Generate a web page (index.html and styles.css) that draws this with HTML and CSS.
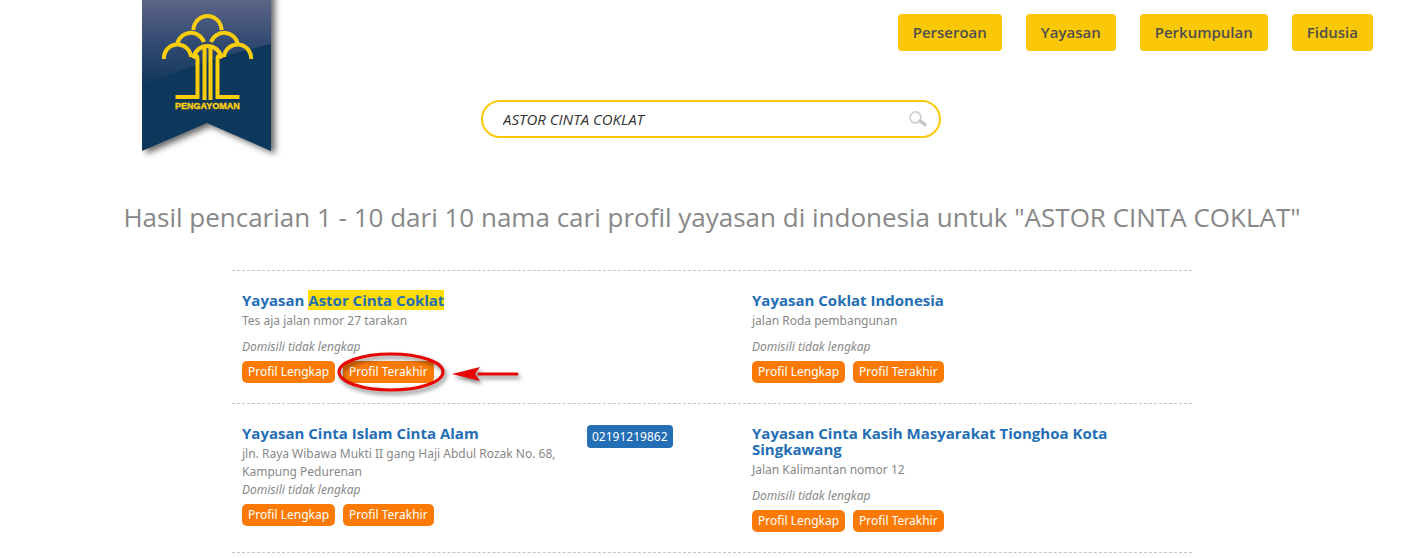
FILE: index.html
```html
<!DOCTYPE html>
<html lang="id">
<head>
  <meta charset="UTF-8" />
  <meta name="viewport" content="width=device-width, initial-scale=1" />
  <title>Cari Profil Yayasan</title>
  <link rel="stylesheet" href="styles.css">
</head>
<body>

<header class="header">
  <a href="#" class="logo" aria-label="Pengayoman">
    <svg width="148" height="165" viewBox="0 0 148 165">
      <defs>
        <linearGradient id="gloss" x1="0" y1="0" x2="0" y2="1">
          <stop offset="0" stop-color="#5c6486" />
          <stop offset="0.5" stop-color="#324a72" />
          <stop offset="1" stop-color="#10375c" />
        </linearGradient>
        <filter id="ribbonShadow" x="-10%" y="-10%" width="130%" height="130%">
          <feDropShadow dx="4" dy="3" stdDeviation="3" flood-color="#000" flood-opacity="0.6" />
        </filter>
      </defs>
      <path d="M0 -10H129V151L65 123L0 151Z" fill="#10375c" filter="url(#ribbonShadow)" />
      <path d="M0 0H129V44Q60 60 0 86Z" fill="url(#gloss)" />
      <!-- banyan tree -->
      <g fill="none" stroke="#fbce0c" stroke-width="4">
        <path d="M51.500 30A14 14 0 0 1 79.500 30" />
        <path d="M35 45A14 14 0 0 1 62 42" />
        <path d="M96 45A14 14 0 0 0 69 42" />
        <path d="M22 59A13.500 13.500 0 0 1 49 57" />
        <path d="M109 59A13.500 13.500 0 0 0 82 57" />
        <path d="M51 58Q55 46 65.500 46Q76 46 80 58" />
        <path d="M51 58Q55 53 55.500 59V97H33.500M80 58Q76 53 75.500 59V97H97.500" />
        <path d="M62.500 46V100M68.500 46V100" />
      </g>
      <text x="33" y="109" class="logo-text">PENGAYOMAN</text>
    </svg>
  </a>

  <nav class="menu">
    <a href="#">Perseroan</a>
    <a href="#">Yayasan</a>
    <a href="#">Perkumpulan</a>
    <a href="#">Fidusia</a>
  </nav>

  <form class="search">
    <input type="text" name="q" value="ASTOR CINTA COKLAT" aria-label="Nama yayasan">
    <button type="submit" aria-label="Cari">
      <svg width="18" height="16" viewBox="0 0 18 16">
        <circle cx="6.500" cy="6.500" r="5.500" fill="none" stroke="#d2d2d2" stroke-width="1.800" />
        <path d="M11 10L16 13.500" stroke="#c8c8c8" stroke-width="3.500" stroke-linecap="round" />
      </svg>
    </button>
  </form>
</header>

<main>
  <h1>Hasil pencarian 1 - 10 dari 10 nama cari profil yayasan di indonesia untuk "ASTOR CINTA COKLAT"</h1>

  <div class="results">
    <div class="row">
      <div class="item">
        <div class="info">
          <h2><a href="#">Yayasan <mark>Astor Cinta Coklat</mark></a></h2>
          <p class="address">Tes aja jalan nmor 27 tarakan</p>
          <p class="domicile">Domisili tidak lengkap</p>
          <div class="actions">
            <a href="#">Profil Lengkap</a>
            <span class="marked">
              <a href="#">Profil Terakhir</a>
              <svg class="pointer" width="192" height="50" viewBox="0 0 192 50">
                <ellipse cx="58" cy="24" rx="52" ry="18" fill="none" stroke="#e80404" stroke-width="3" />
                <path d="M146 26H184" stroke="#e80404" stroke-width="3" stroke-linecap="round" />
                <path d="M119 26L147 19L142 26L147 33Z" fill="#e80404" />
              </svg>
            </span>
          </div>
        </div>
      </div>
      <div class="item">
        <div class="info">
          <h2><a href="#">Yayasan Coklat Indonesia</a></h2>
          <p class="address">jalan Roda pembangunan</p>
          <p class="domicile">Domisili tidak lengkap</p>
          <div class="actions">
            <a href="#">Profil Lengkap</a>
            <a href="#">Profil Terakhir</a>
          </div>
        </div>
      </div>
    </div>

    <div class="row">
      <div class="item">
        <div class="info narrow">
          <h2><a href="#">Yayasan Cinta Islam Cinta Alam</a></h2>
          <p class="address">jln. Raya Wibawa Mukti II gang Haji Abdul Rozak No. 68, Kampung Pedurenan</p>
          <p class="domicile">Domisili tidak lengkap</p>
          <div class="actions">
            <a href="#">Profil Lengkap</a>
            <a href="#">Profil Terakhir</a>
          </div>
        </div>
        <a href="tel:02191219862" class="phone">02191219862</a>
      </div>
      <div class="item">
        <div class="info">
          <h2><a href="#">Yayasan Cinta Kasih Masyarakat Tionghoa Kota Singkawang</a></h2>
          <p class="address">Jalan Kalimantan nomor 12</p>
          <p class="domicile">Domisili tidak lengkap</p>
          <div class="actions">
            <a href="#">Profil Lengkap</a>
            <a href="#">Profil Terakhir</a>
          </div>
        </div>
      </div>
    </div>
  </div>
</main>

</body>
</html>
```
FILE: styles.css
```css
* {
  box-sizing: border-box;
}

body {
  margin: 0;
  background: #fff;
  color: #888;
  font-family: "Noto Sans", "Segoe UI", sans-serif;
  font-size: 12px;
  line-height: 18px;
}

a {
  text-decoration: none;
}

h1, h2, p {
  margin: 0;
}

.header {
  display: grid;
  grid-template-columns: 1fr 460px 1fr;
  grid-template-rows: 100px auto;
}

.logo {
  grid-column: 1;
  grid-row: 1 / 3;
  margin-left: 142px;
  height: 165px;
}

.logo svg {
  display: block;
}

.logo-text {
  fill: #fbce0c;
  stroke: #fbce0c;
  stroke-width: 0.4px;
  font-family: Arial, "Liberation Sans", sans-serif;
  font-size: 9px;
  font-weight: bold;
}

.menu {
  grid-column: 2 / 4;
  grid-row: 1;
  display: flex;
  justify-content: flex-end;
  align-items: flex-start;
  gap: 24px;
  padding: 14px 49px 0 0;
}

.menu a {
  padding: 0 15px;
  border-radius: 4px;
  background: #fac805;
  color: #4f4f4f;
  font-family: "Open Sans", "Segoe UI", sans-serif;
  font-size: 15px;
  font-weight: 600;
  line-height: 37px;
}

.search {
  grid-column: 2;
  grid-row: 2;
  display: flex;
  align-items: center;
  height: 38px;
  padding: 0 12px 0 20px;
  border: 2px solid #fac805;
  border-radius: 19px;
}

.search input {
  flex: 1;
  min-width: 0;
  padding: 0;
  border: 0;
  outline: 0;
  background: none;
  color: #333;
  font-family: "Open Sans", "Segoe UI", sans-serif;
  font-size: 15px;
  font-style: italic;
}

.search button {
  display: flex;
  padding: 0;
  border: 0;
  background: none;
  cursor: pointer;
}

main {
  padding-left: 2px;
}

h1 {
  margin: 32px 20px 0;
  font-family: "Open Sans", "Segoe UI", sans-serif;
  font-size: 26px;
  font-weight: 400;
  line-height: 40px;
  text-align: center;
}

.results {
  max-width: 960px;
  margin: 33px auto 0;
  border-top: 1px dashed #c4c4c4;
}

.row {
  display: grid;
  grid-template-columns: 500px 1fr;
  column-gap: 10px;
  padding: 21px 0 20px;
  border-bottom: 1px dashed #c4c4c4;
}

.item {
  display: flex;
  align-items: flex-start;
  padding: 0 10px;
}

.info {
  width: 370px;
}

.info.narrow {
  width: 345px;
  padding-right: 10px;
}

h2 {
  margin-bottom: 4px;
  font-family: "Open Sans", "Segoe UI", sans-serif;
  font-size: 15px;
  font-weight: 700;
  line-height: 16px;
}

h2 a {
  color: #236eb5;
}

mark {
  background: #fedc05;
  color: inherit;
}

.address {
  min-height: 26px;
}

.domicile {
  font-style: italic;
}

.actions {
  display: flex;
  gap: 8px;
  margin-top: 5px;
}

.actions a {
  display: block;
  padding: 0 6px;
  border-radius: 5px;
  background: #fb7a05;
  color: #fff;
  line-height: 22px;
}

.phone {
  padding: 0 5px;
  border-radius: 4px;
  background: #236eb5;
  color: #fff;
  line-height: 23px;
}

.marked {
  position: relative;
}

/* red circle and arrow drawn over the button */
.pointer {
  position: absolute;
  top: -13px;
  left: -10px;
  pointer-events: none;
  filter: drop-shadow(2px 3px 2px rgba(0, 0, 0, 0.5));
}
```
